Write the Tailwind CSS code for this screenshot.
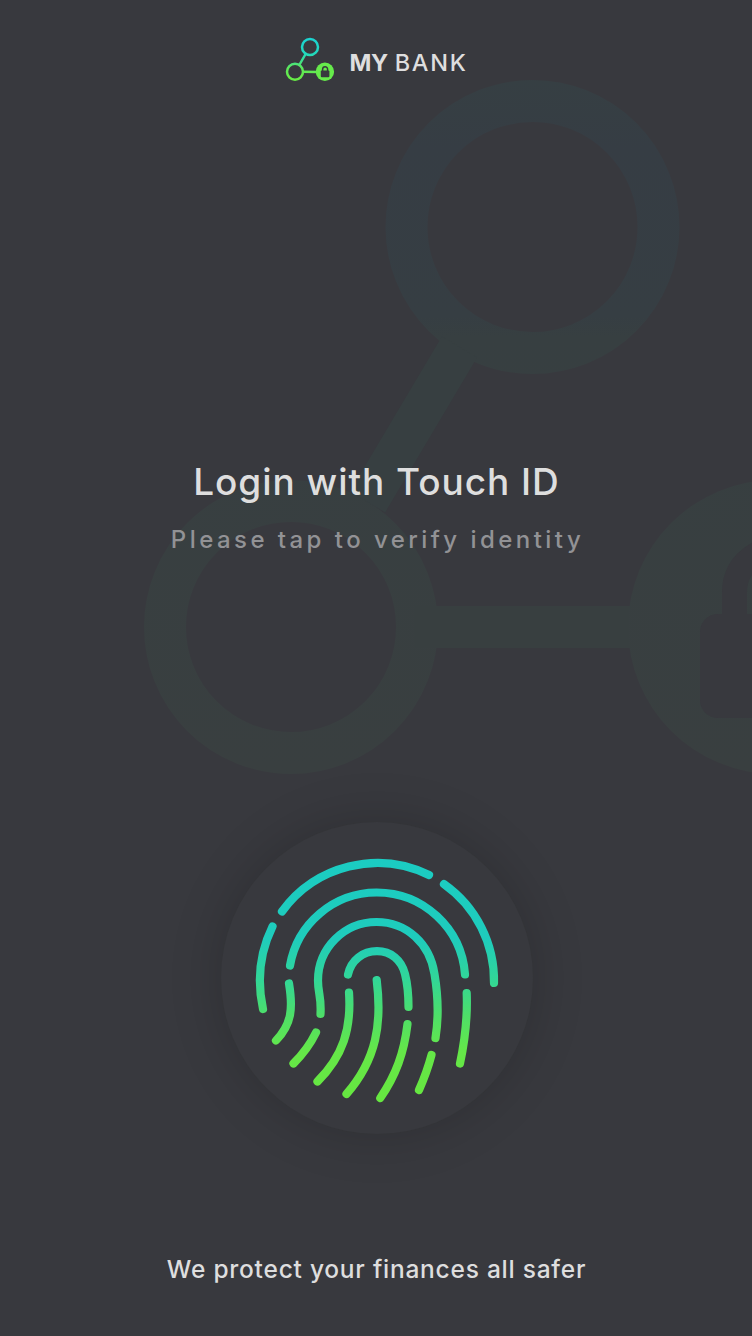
<!DOCTYPE html>
<html lang="en">
<head>
<meta charset="utf-8">
<title>My Bank</title>
<script src="https://cdn.jsdelivr.net/npm/@tailwindcss/browser@4"></script>
</head>
<body class="bg-[#38393e]">
<main class="relative isolate flex h-[1336px] w-[752px] flex-col items-center overflow-hidden bg-[#38393e] font-[Inter,'Open_Sans',sans-serif] text-[#dedede]">
  <svg class="absolute inset-0 -z-10" width="752" height="1336" viewBox="0 0 752 1336" fill="none">
    <defs>
      <linearGradient id="mark" gradientUnits="userSpaceOnUse" x1="0" y1="80" x2="0" y2="774">
        <stop offset="0" stop-color="#363f43"/><stop offset=".1" stop-color="#363d44"/><stop offset=".34" stop-color="#363e43"/><stop offset=".37" stop-color="#373f41"/><stop offset="1" stop-color="#393f40"/>
      </linearGradient>
    </defs>
    <g stroke="url(#mark)" stroke-width="42">
      <circle cx="532.5" cy="227" r="126"/>
      <circle cx="291" cy="627" r="126"/>
    </g>
    <path d="M415 627h225" stroke="#383f40" stroke-width="42"/>
    <path d="M459.5 347 367.5 502" stroke="#373f41" stroke-width="41"/>
    <circle cx="775" cy="627" r="147" fill="url(#mark)"/>
    <rect x="700" y="614" width="150" height="104" rx="18" fill="#38393e"/>
    <path d="M734.5 620V592a40.5 42 0 0 1 81 0v28" stroke="#38393e" stroke-width="25"/>
  </svg>

  <header class="mt-[36px] flex h-[48px] items-center">
    <svg class="mr-[14px]" width="51" height="48" viewBox="285 36 51 48" fill="none">
      <defs>
        <linearGradient id="logo" gradientUnits="userSpaceOnUse" x1="0" y1="40" x2="0" y2="80">
          <stop offset="0" stop-color="#1bd3cf"/><stop offset=".35" stop-color="#22d8bd"/><stop offset=".7" stop-color="#5ee95a"/><stop offset="1" stop-color="#68ec45"/>
        </linearGradient>
      </defs>
      <g stroke="url(#logo)" stroke-width="2.5">
        <circle cx="310" cy="47" r="8"/><circle cx="295" cy="71.8" r="8"/>
        <path d="M305.6 54 299.3 65M303 71.8 317 71.9"/>
      </g>
      <circle cx="324.9" cy="71.8" r="9.2" fill="#66eb4b"/>
      <rect x="320.8" y="70.6" width="8.6" height="6.6" rx="1" fill="#38393e"/>
      <path d="M322.6 71v-1.6a2.5 2.6 0 0 1 5 0V71" stroke="#38393e" stroke-width="1.5"/>
    </svg>
    <h1 class="mt-[6px] flex w-[118px] whitespace-nowrap text-[23.5px] leading-[30px]"><span class="w-[46px] font-bold tracking-[-0.5px]">MY</span><span class="font-medium tracking-[1.7px]">BANK</span></h1>
  </header>

  <h2 class="mt-[375px] whitespace-nowrap pl-[1px] text-[37px] font-medium leading-[46px] tracking-[0.95px]">Login with Touch ID</h2>
  <p class="mt-[20px] whitespace-nowrap pl-[3px] text-[24px] font-medium leading-[30px] tracking-[3.45px] text-[#929295]">Please tap to verify identity</p>

  <button class="mt-[267px] ml-[1px] size-[312px] shrink-0 rounded-full bg-[#38393e] shadow-[0_0_50px_4px_rgba(0,0,0,0.16)]" aria-label="Touch ID">
    <svg width="312" height="312" viewBox="221 822 312 312" fill="none">
      <defs>
        <linearGradient id="print" gradientUnits="userSpaceOnUse" x1="0" y1="860" x2="0" y2="1100">
          <stop offset="0" stop-color="#1bccc2"/><stop offset=".33" stop-color="#1fccbc"/><stop offset=".5" stop-color="#32d797"/><stop offset=".65" stop-color="#4edf68"/><stop offset=".8" stop-color="#65e748"/><stop offset="1" stop-color="#66e740"/>
        </linearGradient>
      </defs>
      <g stroke="url(#print)" stroke-width="8.2" stroke-linecap="round">
        <path d="M282 911.5A118 118 0 0 1 429 875"/>
        <path d="M444 884.2A118 118 0 0 1 494 983"/>
        <path d="M272.5 926.5C260 952 256.5 979 263 1009"/>
        <path d="M290 965.5A88.2 88.2 0 0 1 376.5 892.5A88.5 88.5 0 0 1 465 974.5"/>
        <path d="M320.5 1014C321.5 996 318 994 318 980.5A58.5 58.5 0 0 1 376.5 922C407 922 430 944 434.5 974C438.5 998 439 1016 435.5 1038"/>
        <path d="M348 974.5C351 960 363 951.2 377 951.2C391 951.2 401.500 960 405 974Q408.500 988 408.500 1007"/>
        <path d="M376.700 980C382 1023 377 1059 346.500 1094"/>
        <path d="M349 992.500C351.500 1029 343 1056 317.500 1081.500"/>
        <path d="M316 1032.500Q308 1049 293.500 1063.500"/>
        <path d="M289 983.500C293 1008 292 1024 276 1040.500"/>
        <path d="M407.500 1024C404 1053 396 1075 380.300 1098"/>
        <path d="M431.500 1055Q427 1072 419 1090"/>
        <path d="M466.700 993Q468 1026 460 1063.500"/>
      </g>
    </svg>
  </button>

  <p class="mt-[120px] whitespace-nowrap pl-[1px] text-[24.5px] font-medium leading-[30px] tracking-[0.76px]">We protect your finances all safer</p>
</main>
</body>
</html>
